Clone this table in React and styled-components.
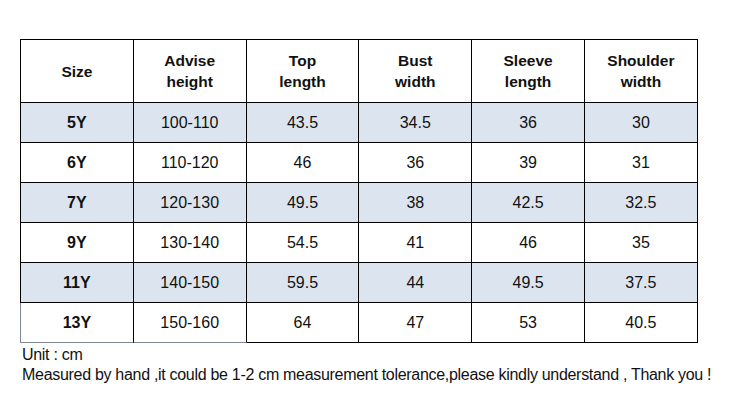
import React from "react";
import styled, { createGlobalStyle } from "styled-components";

const Global = createGlobalStyle`
  html, body { margin: 0; padding: 0; background: #fff; }
  body { font-family: "Liberation Sans", Arial, sans-serif; }
`;

const Page = styled.div`
  width: 733px;
  height: 411px;
  padding: 39px 0 0 20px;
  box-sizing: border-box;
  color: #111;
`;

const Grid = styled.div`
  display: grid;
  grid-template-columns: repeat(6, 112.8px);
  grid-template-rows: 63px repeat(6, 40px);
  width: 678px;
  box-sizing: border-box;
  border-top: 1px solid #000;
  border-left: 1px solid #000;
`;

const Cell = styled.div`
  display: flex;
  align-items: center;
  justify-content: center;
  text-align: center;
  box-sizing: border-box;
  border-right: 1px solid #000;
  border-bottom: 1px solid ${(p) => (p.$soft ? "#7d8894" : "#000")};
  background: ${(p) => (p.$shade ? "#dce5ef" : "#fff")};
  font-size: ${(p) => (p.$head ? "15.5px" : "16px")};
  line-height: 21px;
  font-weight: ${(p) => (p.$bold ? 700 : 400)};
  ${(p) => p.$softLeft && "box-shadow: -1px 0 0 #7d8894;"}
`;

const Notes = styled.div`
  margin-top: 2px;
  padding-left: 2px;
  font-size: 16px;
  line-height: 20px;
  letter-spacing: -0.3px;
  color: #111;
`;

const head = [
  ["Size"],
  ["Advise", "height"],
  ["Top", "length"],
  ["Bust", "width"],
  ["Sleeve", "length"],
  ["Shoulder", "width"],
];

const rows = [
  ["5Y", "100-110", "43.5", "34.5", "36", "30"],
  ["6Y", "110-120", "46", "36", "39", "31"],
  ["7Y", "120-130", "49.5", "38", "42.5", "32.5"],
  ["9Y", "130-140", "54.5", "41", "46", "35"],
  ["11Y", "140-150", "59.5", "44", "49.5", "37.5"],
  ["13Y", "150-160", "64", "47", "53", "40.5"],
];

export default function App() {
  return (
    <Page>
      <Global />
      <Grid>
        {head.map((h, i) => (
          <Cell key={"h" + i} $bold $head>
            <div>
              {h.map((l, j) => (
                <div key={j}>{l}</div>
              ))}
            </div>
          </Cell>
        ))}
        {rows.map((r, ri) =>
          r.map((v, ci) => (
            <Cell
              key={ri + "-" + ci}
              $bold={ci === 0}
              $shade={ri % 2 === 0}
              $soft={ri === rows.length - 1 && ci < 2}
              $softLeft={ri === rows.length - 1 && ci === 0}
            >
              {v}
            </Cell>
          ))
        )}
      </Grid>
      <Notes>
        <div>Unit : cm</div>
        <div>
          Measured by hand ,it could be 1-2 cm measurement tolerance,please kindly understand , Thank you !
        </div>
      </Notes>
    </Page>
  );
}
